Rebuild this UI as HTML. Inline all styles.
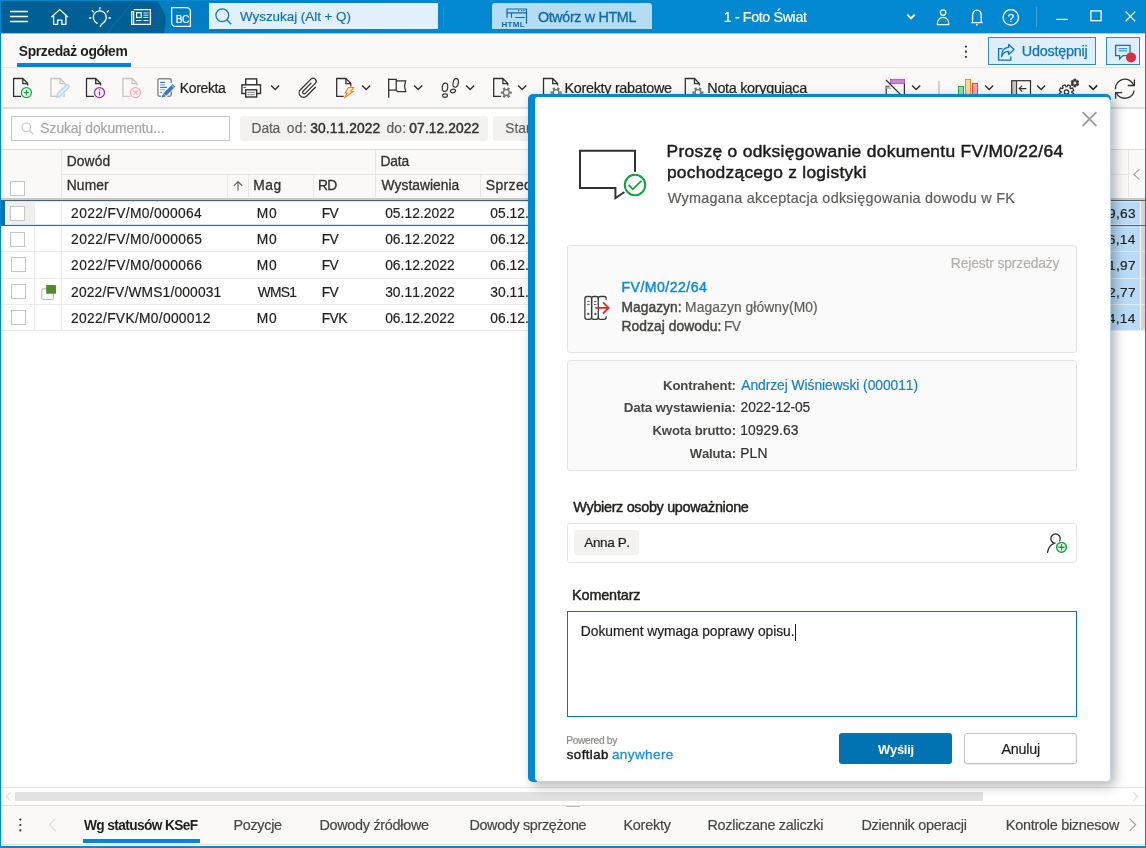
<!DOCTYPE html>
<html lang="pl">
<head>
<meta charset="utf-8">
<title>Sprzedaż ogółem</title>
<style>
*{box-sizing:border-box;margin:0;padding:0}
html,body{width:1146px;height:848px;overflow:hidden;background:#fff}
body{font-family:"Liberation Sans",sans-serif;font-size:14px;color:#201f1e;position:relative}
.abs,.t{position:absolute}
.t{white-space:nowrap;line-height:1;font-kerning:none;-webkit-text-stroke:.2px}
.m{-webkit-text-stroke:.45px}
.h{-webkit-text-stroke:.3px}
svg{position:absolute;overflow:visible}
#win{position:absolute;left:0;top:0;width:1146px;height:848px;overflow:hidden;will-change:transform}
/* title bar */
#tb{left:0;top:0;width:1146px;height:33px;background:linear-gradient(90deg,#017dc3 0,#017dc3 190px,#0288d1 440px,#0288d1 100%)}
#tbtop{left:0;top:0;width:1146px;height:1px;background:#0288d1}
#tbbot{left:1px;top:33px;width:1144px;height:1px;background:linear-gradient(90deg,#99bfd5 0,#99bfd5 163px,#9acbe7 164px,#9acfed 440px)}
/* rows */
#tabrow{left:1px;top:34px;width:1144px;height:34px;background:#faf9f8;border-top:1px solid #fff;border-left:1px solid #fff;border-bottom:1px solid #e6e4e2}
#toolrow{left:1px;top:68px;width:1144px;height:41px;background:#faf9f8;border-left:1px solid #fff;border-bottom:2px solid #e0e0e0}
#filterrow{left:1px;top:109px;width:1144px;height:41px;background:#fff}
#bl{left:0;top:0;width:1px;height:848px;background:#0288d1}
#br{left:1145px;top:0;width:1px;height:848px;background:#0288d1}
#bb{left:0;top:846px;width:1146px;height:2px;background:#0288d1}
</style>
</head>
<body>
<div id="win">
<div id="tb" class="abs"></div>
<div id="tbtop" class="abs"></div>
<div id="tabrow" class="abs"></div>
<div id="toolrow" class="abs"></div>
<div id="filterrow" class="abs"></div>
<div id="tbbot" class="abs"></div>
<svg style="left:0px;top:0px" width="200" height="34" viewBox="0 0 200 34" ><path d="M1 1H157.5C161 7 165.8 14 165.8 20C165.8 25 165 29 164 33H1Z" fill="#006096"/><path d="M133.5 1L107 33" stroke="#1d6f9f" stroke-width="1" fill="none"/></svg>
<svg style="left:8px;top:8px" width="24" height="18" viewBox="8 8 24 18" ><path d="M10 11.5H28M10 16.5H28M10 21.5H28" stroke="#fff" stroke-width="1.3" fill="none"/></svg>
<svg style="left:49px;top:7px" width="22" height="20" viewBox="49 7 22 20" ><path d="M51.3 17.2L59.7 9.6L68.1 17.2M53.6 15.4V24.4H57.6V20.1H61.9V24.4H65.9V15.4" stroke="#fff" stroke-width="1.3" fill="none" stroke-linejoin="miter"/></svg>
<svg style="left:88px;top:6px" width="24" height="22" viewBox="88 6 24 22" ><path d="M97.2 23.3A6.5 6.5 0 1 1 103.6 22.6C102 23.6 101 24.8 100.2 26.6" stroke="#fff" stroke-width="1.3" fill="none" stroke-linecap="round"/><path d="M99.9 7.2V9.4M89.1 18H91.4M108.5 18H110.8M91.9 10.1L93.7 12.3M108.8 10.1L107 12.3" stroke="#fff" stroke-width="1.3" fill="none"/></svg>
<svg style="left:130px;top:8px" width="23" height="18" viewBox="130 8 23 18" ><path d="M133.6 9.6H150.4V24.4H131.7V11.6H133.6V24.4" stroke="#fff" stroke-width="1.3" fill="none"/><rect x="136.6" y="12.7" width="4.6" height="4.8" stroke="#fff" stroke-width="1.2" fill="none"/><path d="M143.4 13H148.4M143.4 15.2H148.4M143.4 17.4H148.4M136 20.6H141.6M143.4 20.6H148.4" stroke="#fff" stroke-width="1" fill="none" opacity=".9"/></svg>
<svg style="left:170px;top:6px" width="22" height="22" viewBox="170 6 22 22" ><path d="M171.6 7.6H186.4A4 4 0 0 1 190.4 11.6V26.4H175.6A4 4 0 0 1 171.6 22.4Z" stroke="#fff" stroke-width="1.3" fill="none"/></svg>
<span class="t" style="left:175.86px;top:14px;font-size:10.20px;line-height:11px;letter-spacing:-0.700px;color:#fff;">BC</span>
<div class="abs" style="left:209px;top:3px;width:229px;height:26px;background:#e1f0fa"></div>
<svg style="left:213px;top:7px" width="22" height="20" viewBox="213 7 22 20" ><circle cx="222.3" cy="15.2" r="6.4" stroke="#0f79bb" stroke-width="1.3" fill="none"/><path d="M226.9 19.8L231.2 24.2" stroke="#0f79bb" stroke-width="1.4"/></svg>
<span class="t" style="left:239.94px;top:9px;font-size:13.40px;line-height:15px;letter-spacing:-0.013px;color:#0d74b4;">Wyszukaj (Alt + Q)</span>
<div class="abs" style="left:443px;top:6px;width:1px;height:22px;background:#2f9bdb;opacity:.55"></div>
<div class="abs" style="left:492px;top:3px;width:160px;height:26px;background:#b4dcf3;border-radius:3px 3px 0 0"></div>
<svg style="left:500px;top:5px" width="30" height="24" viewBox="500 5 30 24" ><path d="M507 17.8V9H526.5V23.8" stroke="#0d6aa5" stroke-width="1.2" fill="none"/><path d="M507 12.9H526.5M511.5 12.9V17.8M515.2 17.5H524.8" stroke="#0d6aa5" stroke-width="1.1" fill="none"/><path d="M518 10.6H519.2M521 10.6H522.2M523.4 10.6H524.6" stroke="#0d6aa5" stroke-width="1.1" fill="none"/></svg>
<span class="t" style="left:501.46px;top:20px;font-size:8.00px;line-height:9px;letter-spacing:0.355px;font-weight:bold;-webkit-text-stroke:0;color:#0d6aa5;">HTML</span>
<span class="t" style="left:537.92px;top:9px;font-size:14.34px;line-height:16px;letter-spacing:-0.350px;color:#0d6aa5;-webkit-text-stroke:.3px #0d6aa5;">Otwórz w HTML</span>
<span class="t" style="left:723.72px;top:9px;font-size:14.22px;line-height:16px;letter-spacing:-0.350px;color:#fff;">1 - Foto Świat</span>
<svg style="left:905px;top:12px" width="12" height="10" viewBox="905 12 12 10" ><path d="M907.3 14.6L911 18.4L914.7 14.6" stroke="#fff" stroke-width="2" fill="none"/></svg>
<svg style="left:935px;top:8px" width="16" height="19" viewBox="935 8 16 19" ><circle cx="943.1" cy="12.6" r="2.7" stroke="#fff" stroke-width="1.3" fill="none"/><path d="M937.3 24.6C937.3 20.4 939.6 17.4 943.1 17.4C946.6 17.4 948.9 20.4 948.9 24.6Z" stroke="#fff" stroke-width="1.3" fill="none" stroke-linejoin="round"/></svg>
<svg style="left:969px;top:8px" width="16" height="19" viewBox="969 8 16 19" ><path d="M971.2 22.6H982.6M972.6 22.4V15.6C972.6 12.4 974.4 10.2 976.9 10.2C979.4 10.2 981.2 12.4 981.2 15.6V22.4M976 24.8H977.8" stroke="#fff" stroke-width="1.3" fill="none"/></svg>
<svg style="left:1001px;top:8px" width="20" height="20" viewBox="1001 8 20 20" ><circle cx="1010.8" cy="17.4" r="7.7" stroke="#fff" stroke-width="1.3" fill="none"/></svg>
<span class="t" style="left:1007.73px;top:12px;font-size:11.50px;line-height:12px;color:#fff;">?</span>
<div class="abs" style="left:1036px;top:7px;width:1px;height:20px;background:#4aa6dc"></div>
<svg style="left:1054px;top:8px" width="84" height="16" viewBox="1054 8 84 16" ><path d="M1056.2 19.4H1067.8" stroke="#fff" stroke-width="1.2"/><rect x="1090.9" y="10.9" width="10.2" height="9.8" stroke="#fff" stroke-width="1.3" fill="none"/><path d="M1125.6 11.6L1135.2 21.2M1135.2 11.6L1125.6 21.2" stroke="#fff" stroke-width="1.3"/></svg>
<span class="t" style="left:18.80px;top:43px;font-size:13.85px;line-height:16px;letter-spacing:-0.350px;font-weight:bold;-webkit-text-stroke:0;color:#201f1e;">Sprzedaż ogółem</span>
<div class="abs" style="left:17px;top:63px;width:114px;height:4px;background:#0a84d0"></div>
<svg style="left:963px;top:44px" width="6" height="16" viewBox="963 44 6 16" ><circle cx="965.9" cy="46.6" r="1.1" fill="#323130"/><circle cx="965.9" cy="51.7" r="1.1" fill="#323130"/><circle cx="965.9" cy="56.8" r="1.1" fill="#323130"/></svg>
<div class="abs" style="left:988px;top:37px;width:108px;height:28px;background:#deeefa;border:1px solid #2b8ccc"></div>
<svg style="left:996px;top:42px" width="20" height="20" viewBox="996 42 20 20" ><path d="M1002.5 48.6H998.6V60.2H1010.8V56.4" stroke="#0d74b4" stroke-width="1.3" fill="none"/><path d="M1008.6 44.4L1014 49.4L1008.6 54.4V51.4C1005 51.4 1002.8 52.8 1001.6 56.6C1001.6 51 1004.2 47.6 1008.6 47.4Z" stroke="#0d74b4" stroke-width="1.3" fill="none" stroke-linejoin="round"/></svg>
<span class="t" style="left:1021.79px;top:43px;font-size:14.40px;line-height:16px;letter-spacing:-0.229px;color:#0d74b4;-webkit-text-stroke:.25px #0d74b4;">Udostępnij</span>
<div class="abs" style="left:1106px;top:37px;width:34px;height:28px;background:#deeefa;border:1px solid #2b8ccc"></div>
<svg style="left:1113px;top:43px" width="24" height="20" viewBox="1113 43 24 20" ><path d="M1115.6 45.4H1130V55.6H1123L1119.6 59V55.6H1115.6Z" stroke="#0d74b4" stroke-width="1.3" fill="none" stroke-linejoin="miter"/><path d="M1118.6 48.6H1127.2M1118.6 50.8H1127.2" stroke="#3b9ad9" stroke-width="1.3"/><circle cx="1131" cy="57.4" r="5" fill="#d9303e"/></svg>
<svg style="left:12px;top:77px" width="22" height="22" viewBox="12 77 22 22" ><path d="M21 96.3H13.6V78.5H22.8L27.7 83.6V85.6 M22.8 78.5V83.6H27.7" stroke="#323130" stroke-width="1.3" fill="none"/><circle cx="26.4" cy="92.6" r="5" stroke="#16a83c" stroke-width="1.25" fill="#faf9f8"/><path d="M23.6 92.6H29.2M26.4 89.8V95.4" stroke="#16a83c" stroke-width="1.3"/></svg>
<svg style="left:49px;top:77px" width="22" height="22" viewBox="49 77 22 22" ><path d="M56.9 96.3H50.9V78.5H60.1L65 83.6V85 M60.1 78.5V83.6H65" stroke="#c8c6c4" stroke-width="1.3" fill="none"/><path d="M56.6 97.2L57.6 93.6L66.2 85.2A1.6 1.6 0 0 1 68.6 87.6L60 96.2Z" stroke="#a9d2ef" stroke-width="1.2" fill="#e4f1fb" stroke-linejoin="round"/><path d="M58 96.2L59.4 97.4" stroke="#a9d2ef" stroke-width="1"/><path d="M62.4 96H64.2V93.4" stroke="#c8c6c4" stroke-width="1.25" fill="none"/></svg>
<svg style="left:85px;top:77px" width="22" height="22" viewBox="85 77 22 22" ><path d="M93.9 96.3H86.5V78.5H95.7L100.6 83.6V85.6 M95.7 78.5V83.6H100.6" stroke="#323130" stroke-width="1.3" fill="none"/><circle cx="99.5" cy="92.6" r="5" stroke="#9a2fb0" stroke-width="1.25" fill="#faf9f8"/><path d="M99.5 91.6V95.6M99.5 89.2V90.4" stroke="#9a2fb0" stroke-width="1.3"/></svg>
<svg style="left:121px;top:77px" width="22" height="22" viewBox="121 77 22 22" ><path d="M130.3 96.3H122.9V78.5H132.1L137 83.6V85.6 M132.1 78.5V83.6H137" stroke="#c8c6c4" stroke-width="1.3" fill="none"/><circle cx="135.5" cy="92.6" r="5" stroke="#f4a9b2" stroke-width="1.25" fill="#faf9f8"/><path d="M133.4 90.5L137.6 94.7M137.6 90.5L133.4 94.7" stroke="#f4a9b2" stroke-width="1.2"/></svg>
<svg style="left:156px;top:77px" width="22" height="22" viewBox="156 77 22 22" ><rect x="157.9" y="78.8" width="13.4" height="17.4" rx="2" fill="#fff"/><path d="M171.3 82.9V80.8A2 2 0 0 0 169.3 78.8H159.9A2 2 0 0 0 157.9 80.8V94.2A2 2 0 0 0 159.9 96.2H161M171.3 91.2V94.2A2 2 0 0 1 169.3 96.2H167.5" stroke="#8a8886" stroke-width="1.4" fill="none"/><path d="M160.1 82.4H164.9M160.1 87.4H166.9M160.1 92.3H162" stroke="#3a77c4" stroke-width="1.1"/><path d="M160.1 84.9H164.9M160.1 89.8H164.9" stroke="#7fa8dc" stroke-width="1.1"/><path d="M161.5 97.6L162.9 93.8L172.6 84.1L175.2 86.7L165.5 96.4Z" fill="#3a77c4"/><path d="M163.1 93.3L166 96.2M171.4 85L174.3 87.9" stroke="#fff" stroke-width=".7"/></svg>
<span class="t" style="left:179.85px;top:80px;font-size:13.97px;line-height:16px;letter-spacing:-0.350px;color:#201f1e;">Korekta</span>
<svg style="left:240px;top:77px" width="23" height="22" viewBox="240 77 23 22" ><rect x="245.7" y="78.9" width="11" height="6" stroke="#323130" stroke-width="1.4" fill="#fff"/><rect x="241.9" y="84.8" width="18.6" height="8.7" stroke="#323130" stroke-width="1.4" fill="#fff"/><rect x="245.7" y="89.8" width="11" height="7.2" stroke="#323130" stroke-width="1.4" fill="#fff"/><path d="M247.4 92.4H254.8M247.4 94.7H254.8" stroke="#9a9896" stroke-width="1.2"/><path d="M243.3 87.4H246" stroke="#1b86d6" stroke-width="1.3"/></svg>
<svg style="left:270px;top:84px" width="11" height="8" viewBox="270 84 11 8" ><path d="M271.1 85.4L275.15 89.5L279.2 85.4" stroke="#323130" stroke-width="1.45" fill="none"/></svg>
<svg style="left:297px;top:76px" width="23" height="24" viewBox="297 76 23 24" ><g transform="translate(308.2 88.2) rotate(45)"><path d="M4.4 -5.8V6.6A4.4 4.4 0 0 1 -4.4 6.6V-8.4A3 3 0 0 1 1.6 -8.4V5.8A1.5 1.5 0 0 1 -1.5 5.8V-5.6" stroke="#323130" stroke-width="1.25" fill="none" stroke-linecap="round"/></g></svg>
<svg style="left:335px;top:77px" width="22" height="22" viewBox="335 77 22 22" ><path d="M343.7 96.3H336.7V78.5H345.9L350.8 83.6V86.6 M345.9 78.5V83.6H350.8" stroke="#323130" stroke-width="1.3" fill="none"/><path d="M348.5 87.5H353.9L350.8 91.2H353.4L344.4 97.9L347.2 93H345Z" stroke="#f2851b" stroke-width="1.1" fill="#fde6cf" stroke-linejoin="round"/></svg>
<svg style="left:360.7px;top:84px" width="11" height="8" viewBox="360.7 84 11 8" ><path d="M361.8 85.4L365.85 89.5L369.9 85.4" stroke="#323130" stroke-width="1.45" fill="none"/></svg>
<svg style="left:387px;top:77px" width="21" height="22" viewBox="387 77 21 22" ><path d="M388.7 78.6V97.8" stroke="#323130" stroke-width="1.3"/><path d="M388.7 79.3H396.2V90.2H388.7M396.2 80.9H405.7L404.5 86.1L405.7 91.5H397.4L396.2 90.2" stroke="#323130" stroke-width="1.25" fill="none" stroke-linejoin="miter"/></svg>
<svg style="left:413.2px;top:84px" width="11" height="8" viewBox="413.2 84 11 8" ><path d="M414.3 85.4L418.35 89.5L422.4 85.4" stroke="#323130" stroke-width="1.45" fill="none"/></svg>
<svg style="left:440px;top:76px" width="21" height="23" viewBox="440 76 21 23" ><ellipse cx="445" cy="87.3" rx="2.7" ry="4.2" transform="rotate(8 445 87.3)" stroke="#323130" stroke-width="1.2" fill="none"/><ellipse cx="445" cy="95.6" rx="2.4" ry="1.8" stroke="#323130" stroke-width="1.2" fill="none"/><ellipse cx="455.7" cy="82.9" rx="2.6" ry="4.4" transform="rotate(12 455.7 82.9)" stroke="#323130" stroke-width="1.2" fill="none"/><ellipse cx="453" cy="91" rx="2.6" ry="1.7" transform="rotate(-12 453 91)" stroke="#323130" stroke-width="1.2" fill="none"/></svg>
<svg style="left:465.3px;top:84px" width="11" height="8" viewBox="465.3 84 11 8" ><path d="M466.4 85.4L470.45 89.5L474.5 85.4" stroke="#323130" stroke-width="1.45" fill="none"/></svg>
<svg style="left:492px;top:77px" width="22" height="23" viewBox="492 77 22 23" ><path d="M501.1 96.3H493.7V78.5H502.9L507.8 83.6V85.6 M502.9 78.5V83.6H507.8" stroke="#323130" stroke-width="1.3" fill="none"/><circle cx="506.3" cy="92.6" r="2.9" stroke="#717373" stroke-width="1.3" fill="none"/><path d="M509.60 92.60L511.80 92.60M507.95 95.46L509.05 97.36M504.65 95.46L503.55 97.36M503.00 92.60L500.80 92.60M504.65 89.74L503.55 87.84M507.95 89.74L509.05 87.84" stroke="#717373" stroke-width="2.4" fill="none"/></svg>
<svg style="left:517.3px;top:84px" width="11" height="8" viewBox="517.3 84 11 8" ><path d="M518.4 85.4L522.45 89.5L526.5 85.4" stroke="#323130" stroke-width="1.45" fill="none"/></svg>
<svg style="left:542px;top:77px" width="22" height="23" viewBox="542 77 22 23" ><path d="M550.9 96.3H543.5V78.5H552.7L557.6 83.6V85.6 M552.7 78.5V83.6H557.6" stroke="#323130" stroke-width="1.3" fill="none"/><circle cx="556.1" cy="92.6" r="2.9" stroke="#717373" stroke-width="1.3" fill="none"/><path d="M559.40 92.60L561.60 92.60M557.75 95.46L558.85 97.36M554.45 95.46L553.35 97.36M552.80 92.60L550.60 92.60M554.45 89.74L553.35 87.84M557.75 89.74L558.85 87.84" stroke="#717373" stroke-width="2.4" fill="none"/></svg>
<span class="t" style="left:564.52px;top:80px;font-size:14.40px;line-height:16px;letter-spacing:-0.302px;color:#201f1e;">Korekty rabatowe</span>
<svg style="left:684px;top:77px" width="22" height="23" viewBox="684 77 22 23" ><path d="M692.7 96.3H685.3V78.5H694.5L699.4 83.6V85.6 M694.5 78.5V83.6H699.4" stroke="#323130" stroke-width="1.3" fill="none"/><circle cx="697.9" cy="92.6" r="2.9" stroke="#717373" stroke-width="1.3" fill="none"/><path d="M701.20 92.60L703.40 92.60M699.55 95.46L700.65 97.36M696.25 95.46L695.15 97.36M694.60 92.60L692.40 92.60M696.25 89.74L695.15 87.84M699.55 89.74L700.65 87.84" stroke="#717373" stroke-width="2.4" fill="none"/></svg>
<span class="t" style="left:707.32px;top:80px;font-size:14.40px;line-height:16px;letter-spacing:-0.298px;color:#201f1e;">Nota korygująca</span>
<svg style="left:884px;top:78px" width="23" height="20" viewBox="884 78 23 20" ><rect x="890.4" y="79.3" width="14.2" height="4.2" fill="#c98acd" stroke="#a84fb3" stroke-width=".8"/><path d="M904.4 83.6V95.6H886.2V86.4H889.6" stroke="#323130" stroke-width="1.2" fill="none"/><path d="M886.4 86.6H889.8L891.6 89H886.4Z" fill="#bebbb8"/><path d="M886 80L902.4 96.4" stroke="#323130" stroke-width="1.3"/></svg>
<svg style="left:910.7px;top:84px" width="11" height="8" viewBox="910.7 84 11 8" ><path d="M911.8 85.4L915.85 89.5L919.9 85.4" stroke="#323130" stroke-width="1.45" fill="none"/></svg>
<div class="abs" style="left:938px;top:81px;width:2px;height:18px;background:#d4d2d0"></div>
<svg style="left:957px;top:78px" width="22" height="22" viewBox="957 78 22 22" ><rect x="958.5" y="86.4" width="5" height="12" fill="#9fd7a9" stroke="#27a345" stroke-width="1"/><rect x="965.5" y="79.4" width="5" height="19" fill="#fbd89a" stroke="#ee8a30" stroke-width="1"/><rect x="972.5" y="83.4" width="5" height="15" fill="#f4a7ab" stroke="#e23f48" stroke-width="1"/></svg>
<svg style="left:984.3px;top:84px" width="11" height="8" viewBox="984.3 84 11 8" ><path d="M985.4 85.4L989.45 89.5L993.5 85.4" stroke="#323130" stroke-width="1.45" fill="none"/></svg>
<svg style="left:1010px;top:79px" width="23" height="20" viewBox="1010 79 23 20" ><rect x="1011.6" y="80.7" width="5" height="15.4" fill="#c8c6c4"/><rect x="1011.7" y="80.7" width="18.8" height="15.4" stroke="#323130" stroke-width="1.2" fill="none"/><path d="M1016.6 80.7V96" stroke="#323130" stroke-width="1"/><path d="M1019.2 88.6H1026.4M1022.2 85.6L1019.2 88.6L1022.2 91.6" stroke="#323130" stroke-width="1.1" fill="none"/></svg>
<svg style="left:1036.2px;top:84px" width="11" height="8" viewBox="1036.2 84 11 8" ><path d="M1037.3 85.4L1041.35 89.5L1045.4 85.4" stroke="#323130" stroke-width="1.45" fill="none"/></svg>
<svg style="left:1058px;top:78px" width="23" height="22" viewBox="1058 78 23 22" ><path d="M1071.77 92.53L1073.66 93.41L1072.56 96.07L1070.60 95.35L1069.85 96.10L1070.57 98.06L1067.91 99.16L1067.03 97.27L1065.97 97.27L1065.09 99.16L1062.43 98.06L1063.15 96.10L1062.40 95.35L1060.44 96.07L1059.34 93.41L1061.23 92.53L1061.23 91.47L1059.34 90.59L1060.44 87.93L1062.40 88.65L1063.15 87.90L1062.43 85.94L1065.09 84.84L1065.97 86.73L1067.03 86.73L1067.91 84.84L1070.57 85.94L1069.85 87.90L1070.60 88.65L1072.56 87.93L1073.66 90.59L1071.77 91.47Z" stroke="#323130" stroke-width="1.2" fill="none" stroke-linejoin="round"/><circle cx="1066.5" cy="92" r="2.2" stroke="#323130" stroke-width="1.2" fill="none"/><path d="M1077.48 83.31L1078.77 83.99L1077.70 85.86L1076.46 85.08L1075.92 85.39L1075.98 86.85L1073.82 86.85L1073.88 85.39L1073.34 85.08L1072.10 85.86L1071.03 83.99L1072.32 83.31L1072.32 82.69L1071.03 82.01L1072.10 80.14L1073.34 80.92L1073.88 80.61L1073.82 79.15L1075.98 79.15L1075.92 80.61L1076.46 80.92L1077.70 80.14L1078.77 82.01L1077.48 82.69Z" stroke="#323130" stroke-width="0.9" fill="#3b3a39" stroke-linejoin="round"/><circle cx="1074.9" cy="83" r="1.9" stroke="#323130" stroke-width="0.9" fill="#faf9f8"/></svg>
<svg style="left:1088.4px;top:84px" width="11" height="8" viewBox="1088.4 84 11 8" ><path d="M1089.5 85.4L1093.55 89.5L1097.6 85.4" stroke="#201f1e" stroke-width="1.55" fill="none"/></svg>
<svg style="left:1113px;top:77px" width="24" height="24" viewBox="1113 77 24 24" ><path d="M1115.4 89.2A9.5 9.5 0 0 1 1133.8 85.4M1127.8 85.5H1134.4V79.4" stroke="#323130" stroke-width="1.3" fill="none"/><path d="M1134.2 90.6A9.5 9.5 0 0 1 1116.3 92.8M1122.2 92.6H1115.6V98.7" stroke="#323130" stroke-width="1.3" fill="none"/></svg>
<div class="abs" style="left:11px;top:116px;width:219px;height:25px;background:#fff;border:1px solid #c8c6c4"></div>
<svg style="left:20px;top:121px" width="14" height="14" viewBox="20 121 14 14" ><circle cx="26.3" cy="127.3" r="4.3" stroke="#c8c6c4" stroke-width="1.1" fill="none"/><path d="M29.4 130.5L33.2 134.4" stroke="#c8c6c4" stroke-width="1.2"/></svg>
<span class="t" style="left:40.37px;top:121px;font-size:13.80px;line-height:15px;letter-spacing:-0.042px;color:#a9a7a5;">Szukaj dokumentu...</span>
<div class="abs" style="left:240px;top:116px;width:248px;height:25px;background:#f3f2f1;border-radius:3px"></div>
<span class="t" style="left:251.57px;top:121px;font-size:13.80px;line-height:15px;letter-spacing:-0.139px;color:#605e5c;">Data</span>
<span class="t" style="left:286.82px;top:121px;font-size:13.80px;line-height:15px;letter-spacing:0.378px;color:#605e5c;">od:</span>
<span class="t m" style="left:310.27px;top:121px;font-size:13.80px;line-height:15px;letter-spacing:0.095px;color:#323130;">30.11.2022</span>
<span class="t" style="left:386.42px;top:121px;font-size:13.80px;line-height:15px;letter-spacing:0.228px;color:#605e5c;">do:</span>
<span class="t m" style="left:409.36px;top:121px;font-size:13.80px;line-height:15px;letter-spacing:0.085px;color:#323130;">07.12.2022</span>
<div class="abs" style="left:493px;top:116px;width:120px;height:25px;background:#f3f2f1;border-radius:3px"></div>
<span class="t" style="left:505.27px;top:121px;font-size:13.80px;line-height:15px;color:#605e5c;">Stan</span>
<div class="abs" style="left:1px;top:149px;width:1144px;height:1px;background:#e1dfdd;"></div>
<div class="abs" style="left:1px;top:150px;width:1144px;height:48px;background:#faf9f8;"></div>
<div class="abs" style="left:1px;top:150px;width:1px;height:48px;background:#fff;"></div>
<div class="abs" style="left:1px;top:198px;width:1144px;height:2px;background:#cbc9c7;"></div>
<div class="abs" style="left:61px;top:150px;width:1px;height:48px;background:#e9e7e5;"></div>
<div class="abs" style="left:375px;top:150px;width:1px;height:48px;background:#e9e7e5;"></div>
<div class="abs" style="left:62px;top:174px;width:1066px;height:1px;background:#e9e7e5;"></div>
<div class="abs" style="left:227px;top:175px;width:1px;height:23px;background:#e9e7e5;"></div>
<div class="abs" style="left:248px;top:175px;width:1px;height:23px;background:#e9e7e5;"></div>
<div class="abs" style="left:313px;top:175px;width:1px;height:23px;background:#e9e7e5;"></div>
<div class="abs" style="left:480px;top:175px;width:1px;height:23px;background:#e9e7e5;"></div>
<div class="abs" style="left:1128px;top:150px;width:1px;height:48px;background:#e9e7e5;"></div>
<span class="t h" style="left:66.77px;top:154px;font-size:13.80px;line-height:15px;letter-spacing:0.091px;color:#323130;">Dowód</span>
<span class="t h" style="left:380.47px;top:154px;font-size:13.80px;line-height:15px;letter-spacing:-0.139px;color:#323130;">Data</span>
<span class="t h" style="left:66.77px;top:178px;font-size:13.80px;line-height:15px;letter-spacing:0.114px;color:#323130;">Numer</span>
<span class="t h" style="left:253.17px;top:178px;font-size:13.80px;line-height:15px;letter-spacing:0.588px;color:#323130;">Mag</span>
<span class="t h" style="left:318.07px;top:178px;font-size:13.80px;line-height:15px;letter-spacing:-0.700px;color:#323130;">RD</span>
<span class="t h" style="left:381.54px;top:178px;font-size:13.80px;line-height:15px;letter-spacing:0.030px;color:#323130;">Wystawienia</span>
<span class="t h" style="left:485.76px;top:177px;font-size:14.00px;line-height:16px;color:#323130;letter-spacing:.35px;">Sprzedaży</span>
<svg style="left:232px;top:180px" width="12" height="12" viewBox="232 180 12 12" ><path d="M238 190.4V181.6M233.8 185.8L238 181.6L242.2 185.8" stroke="#605e5c" stroke-width="1.1" fill="none"/></svg>
<svg style="left:1132px;top:168px" width="9" height="13" viewBox="1132 168 9 13" ><path d="M1139.6 169.2L1133.8 174.4L1139.6 179.6" stroke="#a19f9d" stroke-width="1.1" fill="none"/></svg>
<div class="abs" style="left:10px;top:181px;width:15px;height:15px;background:#fff;border:1px solid #c8c6c4"></div>
<div class="abs" style="left:1100px;top:201px;width:40px;height:24px;background:#b9dbf7;"></div>
<div class="abs" style="left:1141px;top:201px;width:4px;height:24px;background:#d3d4d5;"></div>
<div class="abs" style="left:1100px;top:226px;width:40px;height:25px;background:#b9dbf7;"></div>
<div class="abs" style="left:1141px;top:226px;width:4px;height:25px;background:#d3d4d5;"></div>
<div class="abs" style="left:1100px;top:252px;width:40px;height:26px;background:#b9dbf7;"></div>
<div class="abs" style="left:1141px;top:252px;width:4px;height:26px;background:#d3d4d5;"></div>
<div class="abs" style="left:1100px;top:279px;width:40px;height:25px;background:#b9dbf7;"></div>
<div class="abs" style="left:1141px;top:279px;width:4px;height:25px;background:#d3d4d5;"></div>
<div class="abs" style="left:1100px;top:305px;width:40px;height:25px;background:#b9dbf7;"></div>
<div class="abs" style="left:1141px;top:305px;width:4px;height:25px;background:#d3d4d5;"></div>
<div class="abs" style="left:1px;top:251px;width:1144px;height:1px;background:#edebe9;"></div>
<div class="abs" style="left:1px;top:278px;width:1144px;height:1px;background:#edebe9;"></div>
<div class="abs" style="left:1px;top:304px;width:1144px;height:1px;background:#edebe9;"></div>
<div class="abs" style="left:1px;top:330px;width:1144px;height:1px;background:#edebe9;"></div>
<div class="abs" style="left:34px;top:201px;width:1px;height:129px;background:#efedeb;"></div>
<div class="abs" style="left:61px;top:201px;width:1px;height:129px;background:#efedeb;"></div>
<div class="abs" style="left:5px;top:201px;width:29px;height:24px;background:#f1efee;"></div>
<div class="abs" style="left:1px;top:200px;width:1144px;height:1px;background:#50616f;"></div>
<div class="abs" style="left:1px;top:225px;width:1144px;height:1px;background:#50616f;"></div>
<div class="abs" style="left:5px;top:201px;width:1135px;height:1px;background:#d6e7f3;"></div>
<div class="abs" style="left:5px;top:224px;width:1135px;height:1px;background:#d6e7f3;"></div>
<div class="abs" style="left:1px;top:201px;width:4px;height:24px;background:#0a73b3;"></div>
<div class="abs" style="left:10px;top:206px;width:15px;height:15px;background:#fff;border:1px solid #c8c6c4"></div>
<span class="t" style="left:71.11px;top:206px;font-size:13.80px;line-height:15px;letter-spacing:0.353px;color:#201f1e;">2022/FV/M0/000064</span>
<span class="t" style="left:256.67px;top:206px;font-size:13.80px;line-height:15px;letter-spacing:0.800px;color:#201f1e;">M0</span>
<span class="t" style="left:321.77px;top:206px;font-size:13.80px;line-height:15px;letter-spacing:-0.700px;color:#201f1e;">FV</span>
<span class="t" style="left:385.16px;top:206px;font-size:13.80px;line-height:15px;letter-spacing:0.041px;color:#201f1e;">05.12.2022</span>
<span class="t" style="left:490.26px;top:206px;font-size:13.80px;line-height:15px;letter-spacing:0.041px;color:#201f1e;">05.12.2022</span>
<span class="t" style="left:1072.25px;top:206px;font-size:13.70px;line-height:15px;letter-spacing:0.300px;color:#201f1e;">10 929,63</span>
<div class="abs" style="left:10px;top:232px;width:15px;height:15px;background:#fff;border:1px solid #c8c6c4"></div>
<span class="t" style="left:71.11px;top:232px;font-size:13.80px;line-height:15px;letter-spacing:0.364px;color:#201f1e;">2022/FV/M0/000065</span>
<span class="t" style="left:256.67px;top:232px;font-size:13.80px;line-height:15px;letter-spacing:0.800px;color:#201f1e;">M0</span>
<span class="t" style="left:321.77px;top:232px;font-size:13.80px;line-height:15px;letter-spacing:-0.700px;color:#201f1e;">FV</span>
<span class="t" style="left:385.16px;top:232px;font-size:13.80px;line-height:15px;letter-spacing:0.041px;color:#201f1e;">06.12.2022</span>
<span class="t" style="left:490.26px;top:232px;font-size:13.80px;line-height:15px;letter-spacing:0.041px;color:#201f1e;">06.12.2022</span>
<span class="t" style="left:1079.97px;top:232px;font-size:13.70px;line-height:15px;letter-spacing:0.300px;color:#201f1e;">2 706,14</span>
<div class="abs" style="left:11px;top:257px;width:15px;height:15px;background:#fff;border:1px solid #c8c6c4"></div>
<span class="t" style="left:71.11px;top:258px;font-size:13.80px;line-height:15px;letter-spacing:0.365px;color:#201f1e;">2022/FV/M0/000066</span>
<span class="t" style="left:256.67px;top:258px;font-size:13.80px;line-height:15px;letter-spacing:0.800px;color:#201f1e;">M0</span>
<span class="t" style="left:321.77px;top:258px;font-size:13.80px;line-height:15px;letter-spacing:-0.700px;color:#201f1e;">FV</span>
<span class="t" style="left:385.16px;top:258px;font-size:13.80px;line-height:15px;letter-spacing:0.041px;color:#201f1e;">06.12.2022</span>
<span class="t" style="left:490.26px;top:258px;font-size:13.80px;line-height:15px;letter-spacing:0.041px;color:#201f1e;">06.12.2022</span>
<span class="t" style="left:1080.26px;top:258px;font-size:13.70px;line-height:15px;letter-spacing:0.300px;color:#201f1e;">1 721,97</span>
<div class="abs" style="left:11px;top:284px;width:15px;height:15px;background:#fff;border:1px solid #c8c6c4"></div>
<span class="t" style="left:71.11px;top:285px;font-size:13.80px;line-height:15px;letter-spacing:0.160px;color:#201f1e;">2022/FV/WMS1/000031</span>
<span class="t" style="left:257.74px;top:285px;font-size:13.80px;line-height:15px;letter-spacing:-0.700px;color:#201f1e;">WMS1</span>
<span class="t" style="left:321.77px;top:285px;font-size:13.80px;line-height:15px;letter-spacing:-0.700px;color:#201f1e;">FV</span>
<span class="t" style="left:385.17px;top:285px;font-size:13.80px;line-height:15px;letter-spacing:0.039px;color:#201f1e;">30.11.2022</span>
<span class="t" style="left:490.27px;top:285px;font-size:13.80px;line-height:15px;letter-spacing:0.039px;color:#201f1e;">30.11.2022</span>
<span class="t" style="left:1080.26px;top:285px;font-size:13.70px;line-height:15px;letter-spacing:0.300px;color:#201f1e;">4 182,77</span>
<div class="abs" style="left:11px;top:310px;width:15px;height:15px;background:#fff;border:1px solid #c8c6c4"></div>
<span class="t" style="left:71.11px;top:311px;font-size:13.80px;line-height:15px;letter-spacing:0.302px;color:#201f1e;">2022/FVK/M0/000012</span>
<span class="t" style="left:256.67px;top:311px;font-size:13.80px;line-height:15px;letter-spacing:0.800px;color:#201f1e;">M0</span>
<span class="t" style="left:321.77px;top:311px;font-size:13.80px;line-height:15px;letter-spacing:-0.576px;color:#201f1e;">FVK</span>
<span class="t" style="left:385.16px;top:311px;font-size:13.80px;line-height:15px;letter-spacing:0.041px;color:#201f1e;">06.12.2022</span>
<span class="t" style="left:490.26px;top:311px;font-size:13.80px;line-height:15px;letter-spacing:0.041px;color:#201f1e;">06.12.2022</span>
<span class="t" style="left:1087.14px;top:311px;font-size:13.70px;line-height:15px;letter-spacing:0.300px;color:#201f1e;">-984,14</span>
<svg style="left:40px;top:284px" width="18" height="17" viewBox="40 284 18 17" ><rect x="41.7" y="288.9" width="11.8" height="10.6" rx="1.6" stroke="#c2c0be" stroke-width="1.1" fill="#fff"/><rect x="46.2" y="285" width="9.8" height="8.8" rx=".8" fill="#4f8c2c"/></svg>
<div class="abs" style="left:1px;top:787px;width:1144px;height:1px;background:#e4e4e4;"></div>
<div class="abs" style="left:15px;top:792px;width:968px;height:9px;background:#e2e2e2;"></div>
<svg style="left:4px;top:791px" width="8" height="11" viewBox="4 791 8 11" ><path d="M10.4 792.6L6.2 796.6L10.4 800.6" stroke="#dcdcdc" stroke-width="1.2" fill="none"/></svg>
<svg style="left:1131px;top:791px" width="8" height="11" viewBox="1131 791 8 11" ><path d="M1133.4 792.6L1137.6 796.6L1133.4 800.6" stroke="#dcdcdc" stroke-width="1.2" fill="none"/></svg>
<div class="abs" style="left:1px;top:805px;width:1144px;height:1px;background:#e1dfdd;"></div>
<div class="abs" style="left:1px;top:806px;width:1144px;height:38px;background:#faf9f8;"></div>
<div class="abs" style="left:1px;top:806px;width:1px;height:38px;background:#fff;"></div>
<div class="abs" style="left:1px;top:844px;width:1144px;height:1px;background:#e1dfdd;"></div>
<div class="abs" style="left:1px;top:845px;width:1144px;height:1px;background:#fff;"></div>
<div class="abs" style="left:566px;top:806px;width:14px;height:1px;background:#a19f9d;opacity:.7"></div>
<svg style="left:18px;top:817px" width="6" height="16" viewBox="18 817 6 16" ><circle cx="20.3" cy="819.6" r="1.1" fill="#323130"/><circle cx="20.3" cy="825" r="1.1" fill="#323130"/><circle cx="20.3" cy="830.4" r="1.1" fill="#323130"/></svg>
<svg style="left:47px;top:817px" width="10" height="16" viewBox="47 817 10 16" ><path d="M55.4 818.6L49.4 824.8L55.4 831" stroke="#dddbd9" stroke-width="1.2" fill="none"/></svg>
<svg style="left:1127px;top:817px" width="10" height="16" viewBox="1127 817 10 16" ><path d="M1129.6 818.6L1135.6 824.8L1129.6 831" stroke="#a19f9d" stroke-width="1.2" fill="none"/></svg>
<span class="t" style="left:83.99px;top:818px;font-size:13.72px;line-height:15px;letter-spacing:-0.620px;font-weight:bold;-webkit-text-stroke:0;color:#201f1e;">Wg statusów KSeF</span>
<div class="abs" style="left:83px;top:839px;width:117px;height:4px;background:#0a84d0;"></div>
<span class="t" style="left:233.42px;top:817px;font-size:14.40px;line-height:16px;letter-spacing:-0.283px;color:#484644;">Pozycje</span>
<span class="t" style="left:319.42px;top:817px;font-size:14.40px;line-height:16px;letter-spacing:-0.281px;color:#484644;">Dowody źródłowe</span>
<span class="t" style="left:469.42px;top:817px;font-size:14.40px;line-height:16px;letter-spacing:-0.349px;color:#484644;">Dowody sprzężone</span>
<span class="t" style="left:623.42px;top:817px;font-size:14.40px;line-height:16px;letter-spacing:-0.201px;color:#484644;">Korekty</span>
<span class="t" style="left:707.42px;top:817px;font-size:14.40px;line-height:16px;letter-spacing:-0.266px;color:#484644;">Rozliczane zaliczki</span>
<span class="t" style="left:861.42px;top:817px;font-size:14.40px;line-height:16px;letter-spacing:-0.256px;color:#484644;">Dziennik operacji</span>
<span class="t" style="left:1005.82px;top:817px;font-size:14.40px;line-height:16px;letter-spacing:-0.251px;color:#484644;">Kontrole biznesow</span>
<div class="abs" style="left:528px;top:94px;width:583px;height:688px;background:#fff;border-radius:5px;box-shadow:4px 4px 12px rgba(0,0,0,.30)"></div>
<svg style="left:528px;top:94px" width="583" height="688" viewBox="528 94 583 688" ><defs><clipPath id="lt"><rect x="528" y="94" width="9" height="688"/><rect x="528" y="94" width="583" height="6"/></clipPath></defs><path d="M533 94H1106A5 5 0 0 1 1111 99V777A5 5 0 0 1 1106 782H533A5 5 0 0 1 528 777V99A5 5 0 0 1 533 94ZM538 97A3 3 0 0 0 535 100V778A3 3 0 0 0 538 781H1106A4 4 0 0 0 1110 777V101A4 4 0 0 0 1106 97Z" fill="#b7d9ef" fill-rule="evenodd"/><path d="M533 94H1106A5 5 0 0 1 1111 99V777A5 5 0 0 1 1106 782H533A5 5 0 0 1 528 777V99A5 5 0 0 1 533 94ZM538 97A3 3 0 0 0 535 100V778A3 3 0 0 0 538 781H1106A4 4 0 0 0 1110 777V101A4 4 0 0 0 1106 97Z" fill="#0288d1" fill-rule="evenodd" clip-path="url(#lt)"/></svg>
<svg style="left:1081px;top:111px" width="17" height="17" viewBox="1081 111 17 17" ><path d="M1082.6 112.2L1096.4 126M1096.4 112.2L1082.6 126" stroke="#a19f9d" stroke-width="1.9"/></svg>
<svg style="left:578px;top:148px" width="70" height="53" viewBox="578 148 70 53" ><path d="M635 171.8V150.8H580V188.1H615.4V198.2L624.4 192" stroke="#323130" stroke-width="2" fill="none" stroke-linejoin="miter"/><circle cx="635" cy="185" r="10.2" stroke="#13a243" stroke-width="2" fill="#fff"/><path d="M628.6 185L632.8 189.3L641.4 180.9" stroke="#13a243" stroke-width="1.8" fill="none"/></svg>
<span class="t m" style="left:666.57px;top:141px;font-size:17.40px;line-height:20px;letter-spacing:0.296px;color:#1b1a19;">Proszę o odksięgowanie dokumentu FV/M0/22/64</span>
<span class="t m" style="left:666.88px;top:162px;font-size:17.40px;line-height:20px;letter-spacing:0.263px;color:#1b1a19;">pochodzącego z logistyki</span>
<span class="t" style="left:667.74px;top:190px;font-size:14.40px;line-height:16px;letter-spacing:0.253px;color:#605e5c;">Wymagana akceptacja odksięgowania dowodu w FK</span>
<div class="abs" style="left:567px;top:245px;width:510px;height:108px;background:#fafafa;border:1px solid #e4e4e4;border-radius:3px"></div>
<span class="t" style="left:950.87px;top:256px;font-size:13.80px;line-height:15px;letter-spacing:-0.111px;color:#b3b0ad;">Rejestr sprzedaży</span>
<svg style="left:583px;top:294px" width="28" height="28" viewBox="583 294 28 28" ><rect x="584" y="295.4" width="24" height="25" fill="#fff" opacity=".8"/><rect x="584.9" y="296.5" width="6.7" height="22.8" rx="2" stroke="#3b3a39" stroke-width="1.3" fill="none"/><rect x="591.6" y="296.5" width="6.7" height="22.8" rx="2" stroke="#3b3a39" stroke-width="1.3" fill="none"/><path d="M598.3 299.8V298.5A2 2 0 0 1 600.3 296.5H604.2A2 2 0 0 1 606.2 298.5V299.8M598.3 316.2V317.3A2 2 0 0 0 600.3 319.3H604.2A2 2 0 0 0 606.2 317.3V316.2" stroke="#3b3a39" stroke-width="1.3" fill="none"/><path d="M587.1 301.6H589.6M587.1 304.6H589.6M594 301.6H596.6M594 304.6H596.6" stroke="#605e5c" stroke-width="1"/><circle cx="588.3" cy="313.9" r="1.2" fill="#605e5c"/><circle cx="595.4" cy="313.9" r="1.2" fill="#605e5c"/><path d="M595.2 307.9H608.4M603 302.4L608.6 307.9L603 313.5" stroke="#e8262a" stroke-width="1.8" fill="none"/></svg>
<span class="t m" style="left:621.54px;top:279px;font-size:14.11px;line-height:16px;letter-spacing:0.450px;color:#0f8ad8;">FV/M0/22/64</span>
<span class="t m" style="left:621.57px;top:300px;font-size:13.80px;line-height:15px;letter-spacing:0.023px;color:#484644;">Magazyn:</span>
<span class="t" style="left:685.07px;top:300px;font-size:13.80px;line-height:15px;letter-spacing:0.085px;color:#605e5c;">Magazyn główny(M0)</span>
<span class="t m" style="left:621.57px;top:319px;font-size:13.80px;line-height:15px;letter-spacing:0.056px;color:#484644;">Rodzaj dowodu:</span>
<span class="t" style="left:724.07px;top:319px;font-size:13.80px;line-height:15px;letter-spacing:-0.700px;color:#605e5c;">FV</span>
<div class="abs" style="left:567px;top:360px;width:510px;height:111px;background:#fafafa;border:1px solid #e4e4e4;border-radius:3px"></div>
<span class="t" style="left:663.12px;top:378px;font-size:13.14px;line-height:15px;letter-spacing:-0.150px;font-weight:bold;-webkit-text-stroke:0;color:#484644;">Kontrahent:</span>
<span class="t" style="left:741.27px;top:378px;font-size:13.80px;line-height:15px;letter-spacing:-0.044px;color:#1a7fc3;">Andrzej Wiśniewski (000011)</span>
<span class="t" style="left:623.71px;top:400px;font-size:13.32px;line-height:15px;letter-spacing:-0.150px;font-weight:bold;-webkit-text-stroke:0;color:#484644;">Data wystawienia:</span>
<span class="t" style="left:740.61px;top:400px;font-size:13.80px;line-height:15px;letter-spacing:-0.102px;color:#323130;">2022-12-05</span>
<span class="t" style="left:652.52px;top:423px;font-size:13.13px;line-height:15px;letter-spacing:-0.150px;font-weight:bold;-webkit-text-stroke:0;color:#484644;">Kwota brutto:</span>
<span class="t" style="left:740.25px;top:423px;font-size:13.80px;line-height:15px;letter-spacing:0.100px;color:#323130;">10929.63</span>
<span class="t" style="left:689.69px;top:446px;font-size:13.09px;line-height:15px;letter-spacing:-0.150px;font-weight:bold;-webkit-text-stroke:0;color:#484644;">Waluta:</span>
<span class="t" style="left:740.17px;top:446px;font-size:13.80px;line-height:15px;letter-spacing:0.256px;color:#323130;">PLN</span>
<span class="t m" style="left:573.24px;top:499px;font-size:14.40px;line-height:16px;letter-spacing:-0.316px;color:#201f1e;">Wybierz osoby upoważnione</span>
<div class="abs" style="left:567px;top:523px;width:510px;height:40px;background:#fff;border:1px solid #e6e6e6;border-radius:3px"></div>
<div class="abs" style="left:574px;top:530px;width:65px;height:25px;background:#f3f2f1;border-radius:3px"></div>
<span class="t" style="left:584.37px;top:535px;font-size:13.54px;line-height:15px;letter-spacing:-0.417px;color:#201f1e;">Anna P.</span>
<svg style="left:1045px;top:531px" width="24" height="24" viewBox="1045 531 24 24" ><path d="M1059.6 541A4.7 4.7 0 1 0 1054.4 543.2C1050.6 544.6 1048.4 548 1047.5 552.4" stroke="#323130" stroke-width="1.3" fill="none" stroke-linecap="round"/><circle cx="1061.5" cy="547.3" r="4.9" stroke="#13a243" stroke-width="1.5" fill="#fff"/><path d="M1058.3 547.3H1064.7M1061.5 544.1V550.5" stroke="#13a243" stroke-width="1.4"/></svg>
<span class="t m" style="left:572.12px;top:587px;font-size:14.40px;line-height:16px;letter-spacing:-0.154px;color:#201f1e;">Komentarz</span>
<div class="abs" style="left:567px;top:611px;width:510px;height:106px;background:#fff;border:1px solid #0873b2"></div>
<span class="t" style="left:580.87px;top:624px;font-size:13.80px;line-height:15px;letter-spacing:-0.037px;color:#201f1e;">Dokument wymaga poprawy opisu.</span>
<div class="abs" style="left:795px;top:624px;width:1px;height:17px;background:#201f1e;"></div>
<span class="t" style="left:566.16px;top:735px;font-size:10.20px;line-height:11px;letter-spacing:-0.290px;color:#8a8886;">Powered by</span>
<span class="t m" style="left:566.83px;top:747px;font-size:13.20px;line-height:15px;letter-spacing:0.438px;color:#1b1a19;">softlab</span>
<span class="t" style="left:611.93px;top:747px;font-size:13.45px;line-height:15px;letter-spacing:0.450px;color:#1a8fdd;-webkit-text-stroke:.3px;">anywhere</span>
<div class="abs" style="left:839px;top:733px;width:113px;height:31px;background:#0273b2;border-radius:3px"></div>
<span class="t" style="left:877.99px;top:742px;font-size:12.96px;line-height:15px;letter-spacing:-0.265px;font-weight:bold;-webkit-text-stroke:0;color:#fff;">Wyślij</span>
<div class="abs" style="left:964px;top:733px;width:113px;height:31px;background:#fff;border:1px solid #c4c4c4;border-radius:3px;box-shadow:0 1px 1px rgba(0,0,0,.08)"></div>
<span class="t" style="left:1001.57px;top:741px;font-size:14.40px;line-height:16px;letter-spacing:-0.286px;color:#201f1e;">Anuluj</span>
<div id="bl" class="abs"></div>
<div id="br" class="abs"></div>
<div id="bb" class="abs"></div>
</div>
</body>
</html>
